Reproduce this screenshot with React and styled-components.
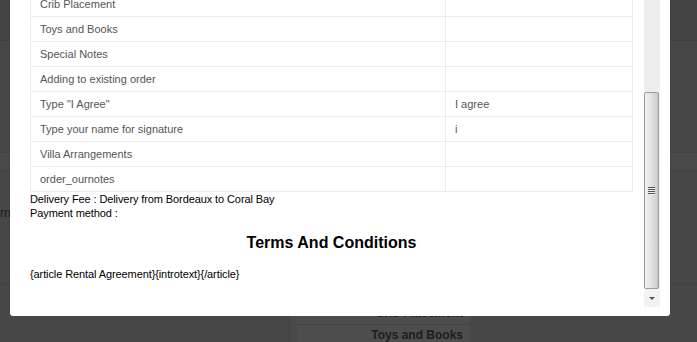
import styled, { createGlobalStyle } from "styled-components";

const GlobalStyle = createGlobalStyle`
  html, body {
    margin: 0;
    padding: 0;
    background: #474747;
    overflow: hidden;
  }
  body {
    font-family: "Liberation Sans", Arial, sans-serif;
  }
`;

/* dimmed page behind the dialog */
const Page = styled.div`
  height: 342px;
  display: flex;
  flex-direction: column;
`;

const TopBand = styled.div`
  height: 40px;
  background: #444;
  border-bottom: 1px solid #3f3f3f;
`;

const Section = styled.div`
  height: ${(p) => p.$h}px;
  box-sizing: border-box;
  padding-top: ${(p) => p.$pt || 0}px;
  background: ${(p) => p.$bg || "#474747"};
  border-bottom: 1px solid #414141;
`;

const BackLabel = styled.div`
  width: 10px;
  overflow: hidden;
  white-space: nowrap;
  font-size: 13px;
  line-height: 15px;
  color: #1c1c1c;
`;

const Bottom = styled.div`
  flex: 1;
  display: flex;
  align-items: flex-start;
  padding: 18px 0 0 289px;
  overflow: hidden;
`;

const BackPanel = styled.div`
  width: 173px;
  border-left: 1px solid #424242;
  background: #4a4a4a;
  padding-left: 7px;
`;

const BackRow = styled.div`
  height: 21px;
  line-height: 21px;
  background: #4d4d4d;
  border-top: 1px solid #444;
  text-align: right;
  padding-right: 7px;
  font-size: 12px;
  font-weight: bold;
  color: #1e1e1e;
`;

/* dialog */
const Modal = styled.div`
  position: fixed;
  left: 10px;
  bottom: 26px;
  width: 640px;
  background: #fff;
  border-radius: 0 0 3px 3px;
  padding: 0 10px 9px 10px;
`;

const Body = styled.div`
  display: flex;
  align-items: stretch;
`;

const Content = styled.div`
  flex: 1;
  padding: 0 11px 26px 10px;
`;

const Table = styled.table`
  width: 100%;
  border-collapse: collapse;
  border: 1px solid #ececec;
  font-size: 11px;
  color: #555;
`;

const Cell = styled.td`
  border: 1px solid #ececec;
  padding: 0 9px;
  line-height: 24px;
  height: 24px;
  width: ${(p) => (p.$label ? "396px" : "auto")};
  white-space: nowrap;
`;

const Info = styled.div`
  font-size: 11px;
  line-height: 14px;
  letter-spacing: -0.1px;
  color: #000;
`;

const Heading = styled.h3`
  margin: 13px 0 14px;
  font-size: 16px;
  line-height: 20px;
  font-weight: bold;
  text-align: center;
  color: #000;
`;

/* scrollbar drawing */
const Scrollbar = styled.div`
  width: 16px;
  display: flex;
  flex-direction: column;
  background: #eeeeee;
`;

const Track = styled.div`
  flex: 1;
`;

const Thumb = styled.div`
  height: 195px;
  margin: 0 1px 0 0;
  border: 1px solid #9b9b9b;
  border-radius: 2px;
  background: linear-gradient(
    to right,
    #f0f0f0 0%,
    #e6e6e6 35%,
    #d6d6d6 75%,
    #c9c9c9 100%
  );
  display: flex;
  align-items: center;
  justify-content: center;
`;

const Grip = styled.div`
  width: 7px;
  height: 8px;
  background: repeating-linear-gradient(
    to bottom,
    #555 0px,
    #555 1px,
    #eee 1px,
    #eee 2px
  );
`;

const DownButton = styled.div`
  height: 18px;
  background: #f2f2f2;
  display: flex;
  align-items: center;
  justify-content: center;
`;

const Arrow = styled.div`
  width: 0;
  height: 0;
  border-left: 3px solid transparent;
  border-right: 3px solid transparent;
  border-top: 3px solid #555;
`;

const rows = [
  ["Crib Placement", ""],
  ["Toys and Books", ""],
  ["Special Notes", ""],
  ["Adding to existing order", ""],
  ['Type "I Agree"', "I agree"],
  ["Type your name for signature", "i"],
  ["Villa Arrangements", ""],
  ["order_ournotes", ""],
];

export default function App() {
  return (
    <>
      <GlobalStyle />
      <Page>
        <TopBand />
        <Section $h={112} />
        <Section $h={18} $bg="#4a4a4a" />
        <Section $h={113} $pt={34}>
          <BackLabel>method</BackLabel>
        </Section>
        <Bottom>
          <BackPanel>
            <BackRow>Crib Placement</BackRow>
            <BackRow>Toys and Books</BackRow>
          </BackPanel>
        </Bottom>
      </Page>

      <Modal>
        <Body>
          <Content>
            <Table>
              <tbody>
                {rows.map(([label, value]) => (
                  <tr key={label}>
                    <Cell $label>{label}</Cell>
                    <Cell>{value}</Cell>
                  </tr>
                ))}
              </tbody>
            </Table>
            <Info>Delivery Fee : Delivery from Bordeaux to Coral Bay</Info>
            <Info>Payment method :</Info>
            <Heading>Terms And Conditions</Heading>
            <Info>{"{article Rental Agreement}{introtext}{/article}"}</Info>
          </Content>
          <Scrollbar>
            <Track />
            <Thumb>
              <Grip />
            </Thumb>
            <DownButton>
              <Arrow />
            </DownButton>
          </Scrollbar>
        </Body>
      </Modal>
    </>
  );
}
